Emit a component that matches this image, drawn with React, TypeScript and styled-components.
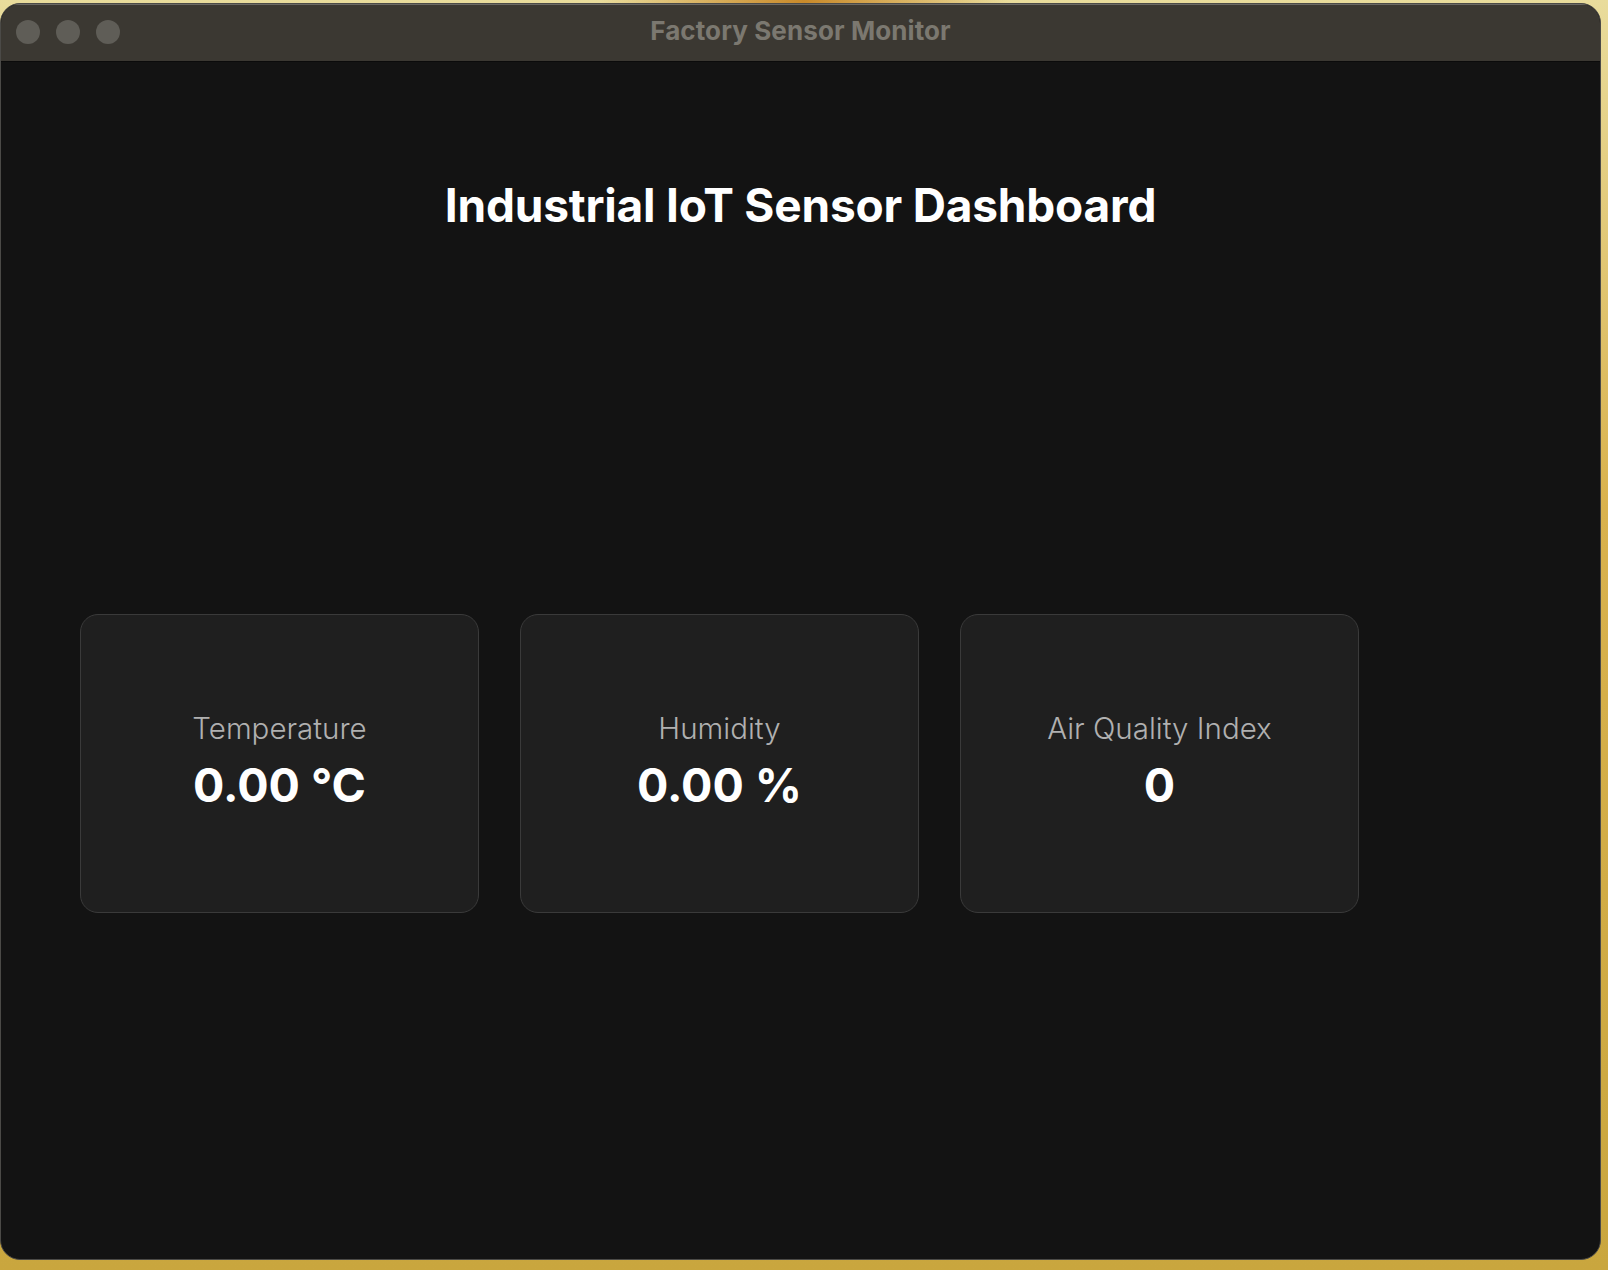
import React from "react";
import styled, { createGlobalStyle } from "styled-components";

const GlobalStyle = createGlobalStyle`
  html, body {
    margin: 0;
    padding: 0;
    width: 1608px;
    height: 1270px;
    overflow: hidden;
  }
  body {
    font-family: Inter, "Noto Sans", "Liberation Sans", sans-serif;
    background:
      radial-gradient(ellipse at 50% 0%, #c98a2a 0%, rgba(201,138,42,0) 18%),
      linear-gradient(180deg, #e9dc9c 0%, #d9b24e 40%, #c9a63e 100%);
  }
`;

const Desktop = styled.div`
  width: 1608px;
  height: 1270px;
  padding-top: 3px;
  box-sizing: border-box;
`;

const Window = styled.div`
  width: 1601px;
  height: 1257px;
  box-sizing: border-box;
  border-radius: 20px;
  border: 1.5px solid #4b4a47;
  overflow: hidden;
  display: flex;
  flex-direction: column;
  background: #131313;
`;

const TitleBar = styled.div`
  position: relative;
  height: 57px;
  flex-shrink: 0;
  background: #3b3832;
  box-shadow: inset 0 1px 0 #6b6964;
  border-bottom: 1px solid #0b0b0b;
  display: flex;
  align-items: center;
  justify-content: center;
`;

const Lights = styled.div`
  position: absolute;
  left: 15px;
  top: 16px;
  display: flex;
  gap: 16px;
`;

const Light = styled.span`
  width: 24px;
  height: 24px;
  border-radius: 50%;
  background: #5f5d57;
`;

const WindowTitle = styled.div`
  font-family: Inter, "Liberation Sans", sans-serif;
  font-weight: 700;
  font-size: 26px;
  color: #7b7870;
  letter-spacing: 0.1px;
  margin-top: -4px;
`;

const Content = styled.main`
  flex: 1;
  display: flex;
  flex-direction: column;
  align-items: stretch;
`;

const Heading = styled.h1`
  margin: 115px 0 0 0;
  text-align: center;
  font-family: Inter, "Liberation Sans", sans-serif;
  font-weight: 700;
  font-size: 46px;
  line-height: 56px;
  color: #ffffff;
  letter-spacing: -0.2px;
`;

const CardArea = styled.section`
  flex: 1;
  display: flex;
  align-items: center;
  padding-left: 79px;
  padding-top: 35px;
`;

const CardGrid = styled.div`
  display: grid;
  grid-template-columns: repeat(3, 399px);
  gap: 41px;
`;

const Card = styled.div`
  height: 299px;
  box-sizing: border-box;
  background: #1f1f1f;
  border: 1.5px solid #3a3a3a;
  border-radius: 18px;
  display: flex;
  flex-direction: column;
  align-items: center;
  justify-content: center;
  padding-bottom: 4px;
`;

const Label = styled.div`
  font-family: Inter, "Liberation Sans", sans-serif;
  font-weight: 300;
  font-size: 29.5px;
  line-height: 36px;
  color: #b0b0b0;
`;

const Value = styled.div`
  font-family: Inter, "Liberation Sans", sans-serif;
  font-weight: 700;
  font-size: 46.5px;
  line-height: 56px;
  color: #ffffff;
  margin-top: 11px;
`;

const sensors = [
  { label: "Temperature", value: "0.00 °C" },
  { label: "Humidity", value: "0.00 %" },
  { label: "Air Quality Index", value: "0" },
];

export default function App() {
  return (
    <>
      <GlobalStyle />
      <Desktop>
        <Window>
          <TitleBar>
            <Lights>
              <Light />
              <Light />
              <Light />
            </Lights>
            <WindowTitle>Factory Sensor Monitor</WindowTitle>
          </TitleBar>
          <Content>
            <Heading>Industrial IoT Sensor Dashboard</Heading>
            <CardArea>
              <CardGrid>
                {sensors.map((s) => (
                  <Card key={s.label}>
                    <Label>{s.label}</Label>
                    <Value>{s.value}</Value>
                  </Card>
                ))}
              </CardGrid>
            </CardArea>
          </Content>
        </Window>
      </Desktop>
    </>
  );
}
